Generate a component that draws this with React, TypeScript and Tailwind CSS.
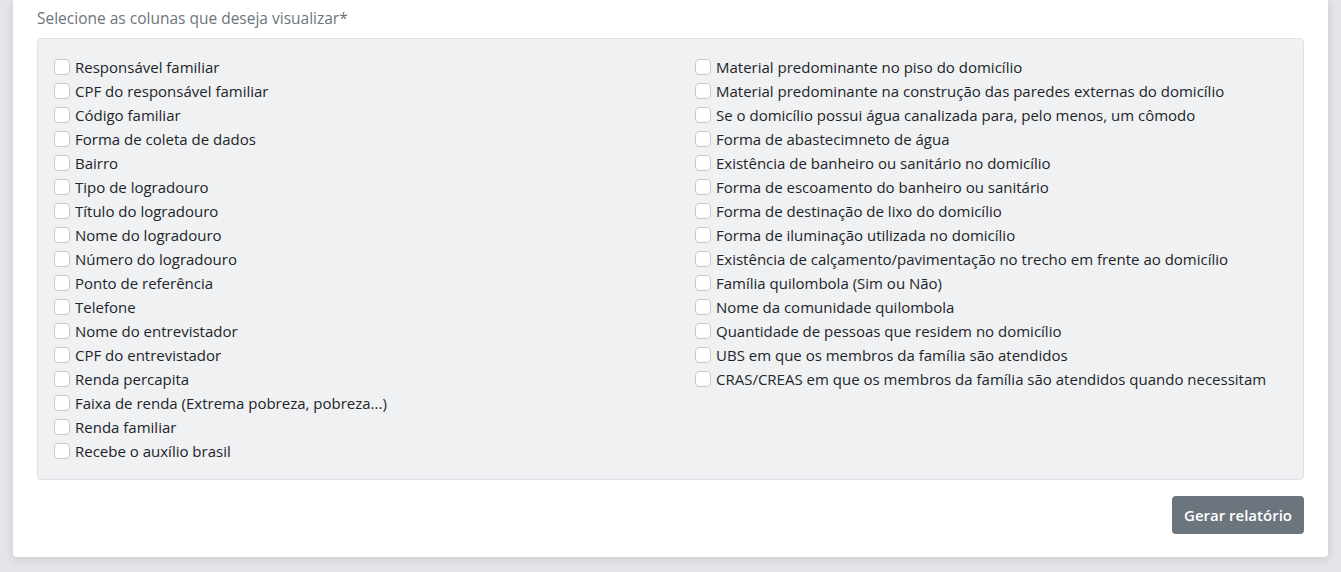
import React from "react";

const col1 = [
  "Responsável familiar",
  "CPF do responsável familiar",
  "Código familiar",
  "Forma de coleta de dados",
  "Bairro",
  "Tipo de logradouro",
  "Título do logradouro",
  "Nome do logradouro",
  "Número do logradouro",
  "Ponto de referência",
  "Telefone",
  "Nome do entrevistador",
  "CPF do entrevistador",
  "Renda percapita",
  "Faixa de renda (Extrema pobreza, pobreza...)",
  "Renda familiar",
  "Recebe o auxílio brasil",
];

const col2 = [
  "Material predominante no piso do domicílio",
  "Material predominante na construção das paredes externas do domicílio",
  "Se o domicílio possui água canalizada para, pelo menos, um cômodo",
  "Forma de abastecimneto de água",
  "Existência de banheiro ou sanitário no domicílio",
  "Forma de escoamento do banheiro ou sanitário",
  "Forma de destinação de lixo do domicílio",
  "Forma de iluminação utilizada no domicílio",
  "Existência de calçamento/pavimentação no trecho em frente ao domicílio",
  "Família quilombola (Sim ou Não)",
  "Nome da comunidade quilombola",
  "Quantidade de pessoas que residem no domicílio",
  "UBS em que os membros da família são atendidos",
  "CRAS/CREAS em que os membros da família são atendidos quando necessitam",
];

function Item({ label }: { label: string }) {
  return (
    <label className="flex items-center h-6 gap-[5px] cursor-pointer">
      <span className="w-[16px] h-[16px] shrink-0 rounded-[4px] border border-[#c5c9ce] bg-white" />
      <span className="text-[15px] leading-6 text-[#212529] whitespace-nowrap">{label}</span>
    </label>
  );
}

export default function App() {
  return (
    <div
      className="h-[572px] w-full bg-[#e3e5e9] px-[13px] overflow-hidden"
      style={{ fontFamily: '"Open Sans", "Noto Sans", sans-serif' }}
    >
      <div className="bg-white h-[557px] rounded-b-[4px] shadow-[0_2px_10px_rgba(0,0,0,0.12)] px-6 pt-[6px]">
        <div className="text-[15.5px] leading-6 text-[#6c757d]">Selecione as colunas que deseja visualizar*</div>
        <div className="mt-2 h-[442px] rounded-[4px] border border-[#dfe2e6] bg-[#f0f1f3] pt-4 pl-4">
          <div className="grid grid-cols-[641px_1fr]">
            <div className="flex flex-col">
              {col1.map((l) => (
                <Item key={l} label={l} />
              ))}
            </div>
            <div className="flex flex-col">
              {col2.map((l) => (
                <Item key={l} label={l} />
              ))}
            </div>
          </div>
        </div>
        <div className="mt-4 flex justify-end">
          <button className="h-[38px] w-[132px] rounded-[4px] bg-[#6c757d] text-white text-[15px] font-semibold">
            Gerar relatório
          </button>
        </div>
      </div>
    </div>
  );
}
